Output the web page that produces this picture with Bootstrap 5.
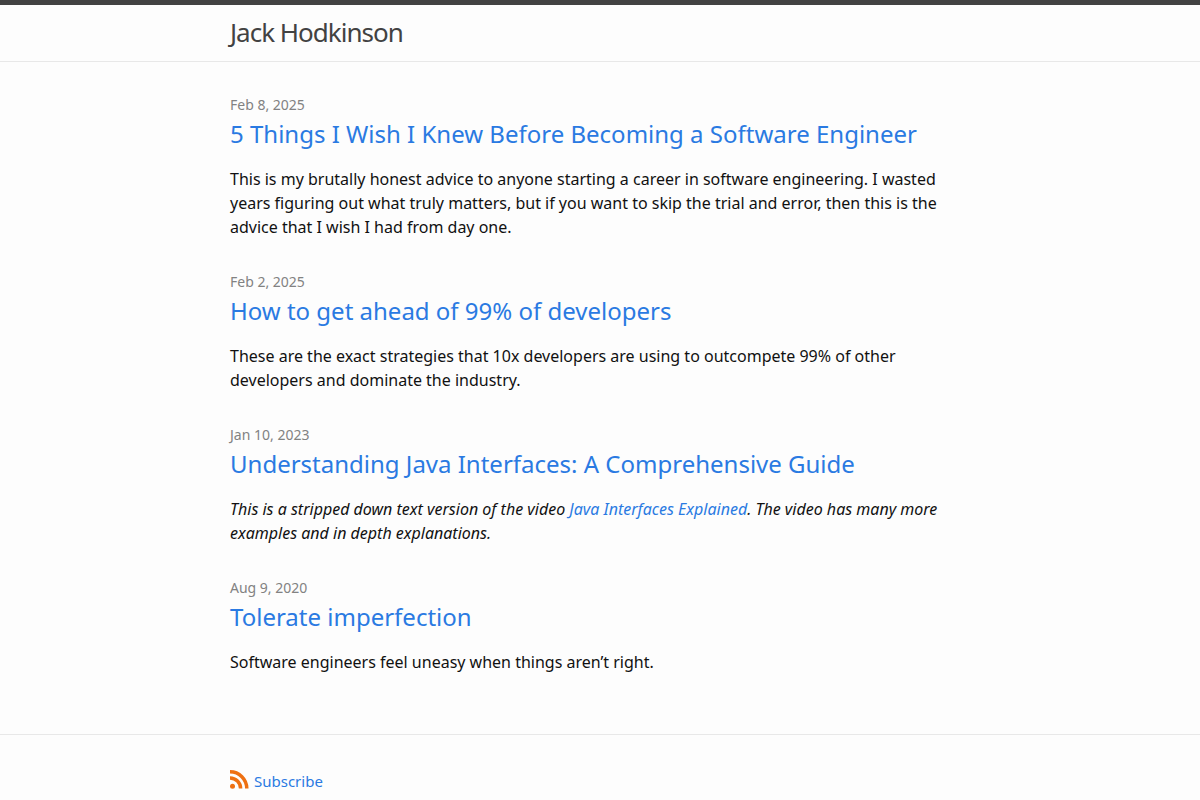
<!DOCTYPE html>
<html lang="en">
<head>
<meta charset="utf-8">
<meta name="viewport" content="width=device-width, initial-scale=1">
<title>Jack Hodkinson</title>
<link href="https://cdn.jsdelivr.net/npm/bootstrap@5.3.0/dist/css/bootstrap.min.css" rel="stylesheet">
<style>
body { font: 16px/24px "Noto Sans", sans-serif; color: #111; background: #fdfdfd; }
a { color: #2a7ae2; text-decoration: none; }
a:hover { color: #111; text-decoration: underline; }
.wrapper { max-width: 800px; padding-left: 30px; padding-right: 30px; }
.site-header { border-top: 5px solid #424242; border-bottom: 1px solid #e8e8e8; }
.site-title { font-size: 26px; line-height: 54px; padding-bottom: 2px; letter-spacing: -1px; color: #424242; }
.page-content { padding-top: 30px; padding-bottom: 30px; }
.post-meta { font-size: 14px; color: #828282; }
.post-title { font-size: 24px; line-height: 34px; font-weight: 400; margin-bottom: 16px; }
.post-item { margin-bottom: 30px; }
.site-footer { border-top: 1px solid #e8e8e8; padding: 34px 0 30px; font-size: 15px; }
</style>
</head>
<body>
<header class="site-header">
  <div class="wrapper mx-auto"><a class="site-title d-inline-block align-top" href="#">Jack Hodkinson</a></div>
</header>
<main class="wrapper page-content mx-auto">
  <ul class="list-unstyled mb-0">
    <li class="post-item">
      <span class="post-meta">Feb 8, 2025</span>
      <h2 class="post-title"><a href="#">5 Things I Wish I Knew Before Becoming a Software Engineer</a></h2>
      <p class="mb-0">This is my brutally honest advice to anyone starting a career in software engineering. I wasted years figuring out what truly matters, but if you want to skip the trial and error, then this is the advice that I wish I had from day one.</p>
    </li>
    <li class="post-item">
      <span class="post-meta">Feb 2, 2025</span>
      <h2 class="post-title"><a href="#">How to get ahead of 99% of developers</a></h2>
      <p class="mb-0">These are the exact strategies that 10x developers are using to outcompete 99% of other developers and dominate the industry.</p>
    </li>
    <li class="post-item">
      <span class="post-meta">Jan 10, 2023</span>
      <h2 class="post-title"><a href="#">Understanding Java Interfaces: A Comprehensive Guide</a></h2>
      <p class="mb-0"><em>This is a stripped down text version of the video <a href="#">Java Interfaces Explained</a>. The video has many more examples and in depth explanations.</em></p>
    </li>
    <li class="post-item">
      <span class="post-meta">Aug 9, 2020</span>
      <h2 class="post-title"><a href="#">Tolerate imperfection</a></h2>
      <p class="mb-0">Software engineers feel uneasy when things aren’t right.</p>
    </li>
  </ul>
</main>
<footer class="site-footer">
  <div class="wrapper mx-auto"><a class="d-inline-flex align-items-center" href="#">
    <svg width="20" height="22" viewBox="0 0 20 22" aria-hidden="true"><circle cx="2.5" cy="16.2" r="2.5" fill="#ee7012"/><path d="M0 1.8A16.8 16.8 0 0 1 16.8 18.6M0 8A10.6 10.6 0 0 1 10.6 18.6" fill="none" stroke="#ee7012" stroke-width="3.5"/></svg><span class="ms-1">Subscribe</span></a></div>
</footer>
<script src="https://cdn.jsdelivr.net/npm/bootstrap@5.3.0/dist/js/bootstrap.bundle.min.js"></script>
</body>
</html>
